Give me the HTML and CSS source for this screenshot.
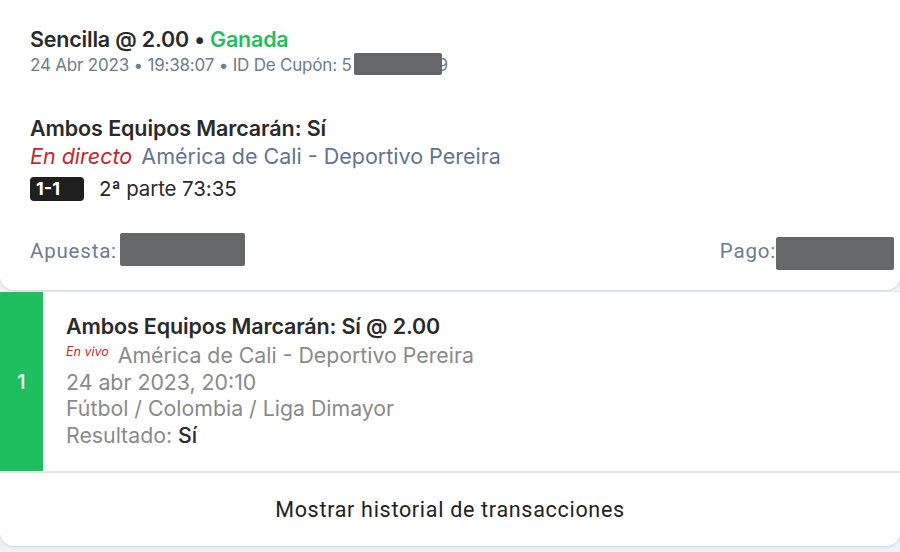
FILE: index.html
```html
<!DOCTYPE html>
<html lang="es">
<head>
  <meta charset="UTF-8">
  <meta name="viewport" content="width=device-width, initial-scale=1.0">
  <title>Detalle de apuesta</title>
  <link rel="stylesheet" href="styles.css">
</head>
<body>
  <div class="card summary">
    <div class="head">
      <div class="title">Sencilla @ 2.00 <span class="dot">•</span> <span class="won">Ganada</span></div>
      <div class="meta">24 Abr 2023 • 19:38:07 • ID De Cupón: 5<span class="mask mask-id"></span>9</div>
    </div>
    <div class="market">
      <div class="market-name">Ambos Equipos Marcarán: Sí</div>
      <div class="event"><span class="live">En directo</span> América de Cali - Deportivo Pereira</div>
      <div class="score-line"><span class="score">1-1</span><span class="period">2ª parte 73:35</span></div>
    </div>
    <div class="amounts">
      <div class="amount">Apuesta:<span class="mask mask-stake"></span></div>
      <div class="amount">Pago:<span class="mask mask-pay"></span></div>
    </div>
  </div>

  <div class="card details">
    <div class="selection">
      <div class="sel-num">1</div>
      <div class="sel-body">
        <div class="sel-title">Ambos Equipos Marcarán: Sí @ 2.00</div>
        <div class="sel-line"><span class="live-small">En vivo</span> América de Cali - Deportivo Pereira</div>
        <div class="sel-line">24 abr 2023, 20:10</div>
        <div class="sel-line">Fútbol / Colombia / Liga Dimayor</div>
        <div class="sel-line">Resultado: <span class="result">Sí</span></div>
      </div>
    </div>
    <button class="history">Mostrar historial de transacciones</button>
  </div>
</body>
</html>
```

FILE: styles.css
```css
:root {
  --bg: #eef3f8;
  --card: #ffffff;
  --text: #2a2a2a;
  --muted: #6c7d90;
  --muted-blue: #5f7590;
  --muted-gray: #8a8a8a;
  --green: #1fbf5f;
  --red: #c4262e;
  --mask: #666769;
}
* { box-sizing: border-box; }
body {
  margin: 0;
  background: var(--bg);
  font-family: "Inter", "Noto Sans", sans-serif;
  color: var(--text);
  width: 900px;
  height: 552px;
  overflow: hidden;
}
.card {
  background: var(--card);
  border-radius: 0 0 14px 14px;
  box-shadow: 0 1px 3px rgba(0,0,0,0.12);
}

/* Summary card */
.summary { height: 290px; padding: 0 6px 0 30px; display: flex; flex-direction: column; }
.head { padding-top: 26px; }
.title { font-size: 21.5px; line-height: 26px; font-weight: 600; letter-spacing: -0.2px; }
.won { color: var(--green); }
.meta { font-size: 17px; line-height: 22px; color: var(--muted); margin-top: 2px; letter-spacing: -0.2px; }
.mask { display: inline-block; background: var(--mask); border-radius: 2px; vertical-align: middle; }
.mask-id { width: 88px; height: 22px; margin: -4px -4px 0 2px; position: relative; z-index: 1; }

.market { margin-top: 38px; }
.market-name { font-size: 21.5px; line-height: 28px; font-weight: 600; letter-spacing: -0.1px; }
.event { font-size: 21.5px; line-height: 29px; color: var(--muted-blue); letter-spacing: 0; }
.live { color: var(--red); font-style: italic; margin-right: 3px; }
.score-line { display: flex; align-items: center; gap: 15px; margin-top: 6px; }
.score {
  background: #1f1f1f; color: #fff; font-weight: 700; font-size: 18px;
  width: 54px; height: 24px; border-radius: 4px; padding: 0 0 0 6px; line-height: 24px;
}
.period { font-size: 20.5px; line-height: 24px; letter-spacing: -0.1px; }

.amounts { display: flex; justify-content: space-between; align-items: flex-start; margin-top: 32px; }
.amount { font-family: "Roboto", sans-serif; font-size: 20.5px; letter-spacing: 0.8px; color: var(--muted); display: flex; align-items: center; height: 33px; padding-top: 2px; }
.mask-stake { width: 125px; height: 33px; margin-left: 3px; margin-top: -2px; }
.mask-pay { width: 118px; height: 33px; margin-top: 6px; }

/* Details card */
.details { margin-top: 2px; height: 254px; display: flex; flex-direction: column; }
.selection { display: flex; height: 181px; border-bottom: 2px solid #e4e6e8; }
.sel-num {
  width: 43px; background: var(--green); color: #fff; font-size: 20px; font-weight: 500;
  display: flex; align-items: center; justify-content: center;
}
.sel-body { padding: 22px 0 0 23px; }
.sel-title { font-size: 21.5px; line-height: 25px; font-weight: 600; letter-spacing: -0.15px; }
.sel-line { font-size: 21.3px; color: var(--muted-gray); line-height: 26.5px; letter-spacing: 0; }
.live-small { color: var(--red); font-style: italic; font-size: 12.5px; vertical-align: 7px; margin-right: 3px; }
.result { color: var(--text); font-weight: 500; }
.history {
  flex: 1; border: none; background: transparent; cursor: pointer;
  font-family: "Roboto", sans-serif; font-size: 21.5px; letter-spacing: 0.7px; color: #222; padding: 0;
}
```
